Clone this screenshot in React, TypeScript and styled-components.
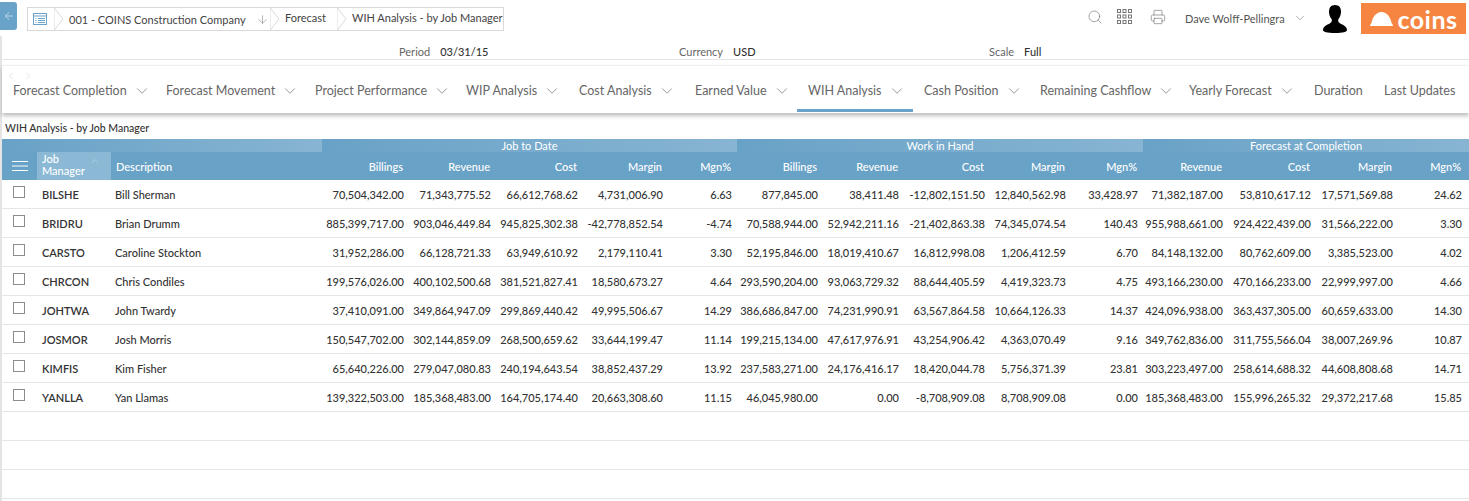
import React from "react";
import styled, { createGlobalStyle } from "styled-components";
import { ArrowLeft, ArrowDown, ChevronDown, ChevronUp, ChevronLeft, ChevronRight, Search, Printer } from "lucide-react";

const Global = createGlobalStyle`
  html, body { margin: 0; padding: 0; background: #fff; overflow: hidden; }
  body { font-family: Lato, "Open Sans", sans-serif; color: #333; }
`;

const Page = styled.div`
  width: 1469px;
  height: 501px;
  overflow: hidden;
  position: relative;
`;
const LeftEdge = styled.div`
  position: absolute;
  left: 0;
  top: 36px;
  bottom: 0;
  width: 2px;
  background: #e4e4e4;
`;
const TopBar = styled.header`
  height: 36px;
  display: flex;
  align-items: flex-start;
`;
const BackButton = styled.button`
  width: 17px;
  height: 28px;
  margin-top: 2px;
  padding: 0;
  border: 0;
  border-radius: 0 3px 3px 0;
  background: #6aa3c9;
  color: #cfe3ef;
  display: flex;
  align-items: center;
  justify-content: center;
`;
const Crumbs = styled.nav`
  display: flex;
  margin: 7px 0 0 10px;
`;
const Crumb = styled.div<{ $w: number; $last?: boolean; $up?: boolean }>`
  position: relative;
  box-sizing: border-box;
  width: ${(p) => p.$w}px;
  height: 24px;
  border: 1px solid #d9d9d9;
  border-left: 0;
  border-right: ${(p) => (p.$last ? "1px solid #d9d9d9" : "0")};
  font-size: 11px;
  color: #444;
  display: flex;
  align-items: ${(p) => (p.$up ? "flex-start" : "center")};
  padding-top: ${(p) => (p.$up ? "3px" : "0")};
  padding-left: 14px;
  gap: 10px;
  white-space: nowrap;
`;
const FirstCrumb = styled(Crumb)`
  border-left: 1px solid #d9d9d9;
  padding-left: 4px;
`;
const CrumbTip = styled.svg`
  position: absolute;
  right: -9px;
  top: -1px;
  z-index: 1;
`;
const TopRight = styled.div`
  margin-left: auto;
  display: flex;
  align-items: flex-start;
  color: #777;
`;
const IconSlot = styled.span<{ $w: number }>`
  width: ${(p) => p.$w}px;
  padding-top: 9px;
  display: flex;
`;
const UserName = styled.span`
  font-size: 11px;
  color: #555;
  padding-top: 12px;
  width: 108px;
`;
const UserChevron = styled.span`
  width: 29px;
  padding-top: 11px;
  display: flex;
  color: #777;
`;
const Avatar = styled.span`
  width: 39px;
  padding-top: 5px;
  display: flex;
`;
const Logo = styled.div`
  width: 105px;
  height: 31px;
  margin: 3px 3px 0 0;
  background: #f58540;
  display: flex;
  align-items: center;
  justify-content: center;
  gap: 3px;
  color: #fff;
  font-size: 25px;
  font-weight: 700;
  line-height: 26px;
  letter-spacing: 0.5px;
`;
const InfoRow = styled.div`
  height: 24px;
  margin-left: 2px;
  border-bottom: 1px solid #e4e4e4;
  display: flex;
  font-size: 11px;
  color: #666;
  padding-top: 9px;
  box-sizing: border-box;
`;
const Info = styled.div<{ $w: number }>`
  width: ${(p) => p.$w}px;
  display: flex;
  gap: 10px;
  white-space: nowrap;
`;
const InfoValue = styled.span`
  color: #333;
  font-weight: 500;
`;
const NavBlock = styled.div`
  position: relative;
  height: 48px;
  margin: 5px 0 0 2px;
  border-top: 1px solid #f0f0f0;
  box-sizing: border-box;
  box-shadow: 0 3px 4px rgba(0, 0, 0, 0.25);
  background: #fff;
`;
const Pager = styled.div`
  position: absolute;
  left: 3px;
  top: 4px;
  display: flex;
  gap: 5px;
  color: #c9c9c9;
`;
const Tabs = styled.div`
  display: flex;
  height: 100%;
  padding-top: 17px;
  box-sizing: border-box;
`;
const Tab = styled.div<{ $w: number; $active?: boolean }>`
  box-sizing: border-box;
  width: ${(p) => p.$w}px;
  padding-left: 11px;
  font-size: 12.5px;
  color: #666;
  display: flex;
  gap: 6px;
  height: 29px;
  white-space: nowrap;
  border-bottom: ${(p) => (p.$active ? "3px solid #6aa3c9" : "3px solid transparent")};
`;
const TabChevron = styled.span`
  display: flex;
  color: #777;
  margin-top: -1px;
`;
const Title = styled.div`
  height: 26px;
  padding: 9px 0 0 5px;
  box-sizing: border-box;
  font-size: 10.5px;
  color: #333;
  font-weight: 500;
`;
const COLS =
  "35px 74px 211px 87px 87px 87px 85px 69px 86px 81px 86px 81px 72px 85px 88px 82px 69px";
const Table = styled.div`
  margin-left: 2px;
`;
const GroupRow = styled.div`
  display: grid;
  grid-template-columns: 320px 415px 406px 1fr;
  height: 13px;
  background: #69a2c7;
`;
const GroupCell = styled.div`
  background: linear-gradient(90deg, rgba(255, 255, 255, 0), rgba(255, 255, 255, 0.2));
  text-align: center;
  color: #fff;
  font-size: 11px;
  line-height: 13px;
`;
const HeadRow = styled.div`
  display: grid;
  grid-template-columns: ${COLS};
  height: 28px;
  background: #69a2c7;
  color: #fff;
  font-size: 11px;
  font-weight: 500;
  align-items: center;
`;
const MenuCell = styled.div`
  display: flex;
  justify-content: center;
  padding-left: 0;
`;
const SortCell = styled.div`
  background: #8ab8d5;
  height: 28px;
  box-sizing: border-box;
  padding-left: 5px;
  line-height: 12px;
  padding-top: 1px;
  position: relative;
`;
const SortIcon = styled.span`
  position: absolute;
  right: 10px;
  top: 3px;
  display: flex;
  color: #cfe3ef;
`;
const HeadText = styled.div`
  padding-left: 5px;
`;
const HeadNum = styled.div`
  text-align: right;
  padding-right: 6px;
`;
const Row = styled.div`
  display: grid;
  grid-template-columns: ${COLS};
  height: 29px;
  box-sizing: border-box;
  border-bottom: 1px solid #e6e6e6;
  align-items: center;
  font-size: 11px;
  font-weight: 500;
  color: #333;
  white-space: nowrap;
`;
const CheckCell = styled.div`
  display: flex;
  padding: 0 0 5px 11px;
`;
const Check = styled.span`
  width: 10px;
  height: 10px;
  border: 1px solid #8c8c8c;
  display: block;
`;
const Code = styled.div`
  padding-left: 5px;
  font-weight: 600;
`;
const Desc = styled.div`
  padding-left: 4px;
`;
const Num = styled.div`
  text-align: right;
  padding-right: 5px;
`;

const heads = ["Billings","Revenue","Cost","Margin","Mgn%","Billings","Revenue","Cost","Margin","Mgn%","Revenue","Cost","Margin","Mgn%"];
const rows: string[][] = [
  ["BILSHE","Bill Sherman","70,504,342.00","71,343,775.52","66,612,768.62","4,731,006.90","6.63","877,845.00","38,411.48","-12,802,151.50","12,840,562.98","33,428.97","71,382,187.00","53,810,617.12","17,571,569.88","24.62"],
  ["BRIDRU","Brian Drumm","885,399,717.00","903,046,449.84","945,825,302.38","-42,778,852.54","-4.74","70,588,944.00","52,942,211.16","-21,402,863.38","74,345,074.54","140.43","955,988,661.00","924,422,439.00","31,566,222.00","3.30"],
  ["CARSTO","Caroline Stockton","31,952,286.00","66,128,721.33","63,949,610.92","2,179,110.41","3.30","52,195,846.00","18,019,410.67","16,812,998.08","1,206,412.59","6.70","84,148,132.00","80,762,609.00","3,385,523.00","4.02"],
  ["CHRCON","Chris Condiles","199,576,026.00","400,102,500.68","381,521,827.41","18,580,673.27","4.64","293,590,204.00","93,063,729.32","88,644,405.59","4,419,323.73","4.75","493,166,230.00","470,166,233.00","22,999,997.00","4.66"],
  ["JOHTWA","John Twardy","37,410,091.00","349,864,947.09","299,869,440.42","49,995,506.67","14.29","386,686,847.00","74,231,990.91","63,567,864.58","10,664,126.33","14.37","424,096,938.00","363,437,305.00","60,659,633.00","14.30"],
  ["JOSMOR","Josh Morris","150,547,702.00","302,144,859.09","268,500,659.62","33,644,199.47","11.14","199,215,134.00","47,617,976.91","43,254,906.42","4,363,070.49","9.16","349,762,836.00","311,755,566.04","38,007,269.96","10.87"],
  ["KIMFIS","Kim Fisher","65,640,226.00","279,047,080.83","240,194,643.54","38,852,437.29","13.92","237,583,271.00","24,176,416.17","18,420,044.78","5,756,371.39","23.81","303,223,497.00","258,614,688.32","44,608,808.68","14.71"],
  ["YANLLA","Yan Llamas","139,322,503.00","185,368,483.00","164,705,174.40","20,663,308.60","11.15","46,045,980.00","0.00","-8,708,909.08","8,708,909.08","0.00","185,368,483.00","155,996,265.32","29,372,217.68","15.85"],
];
const tabs: [string, number, boolean][] = [
  ["Forecast Completion",153,true],["Forecast Movement",149,true],["Project Performance",151,true],["WIP Analysis",113,true],
  ["Cost Analysis",116,true],["Earned Value",113,true],["WIH Analysis",116,true],["Cash Position",116,true],
  ["Remaining Cashflow",149,true],["Yearly Forecast",125,true],["Duration",70,false],["Last Updates",80,false],
];

const Tip = () => (
  <CrumbTip width="10" height="24" viewBox="0 0 10 24">
    <polygon points="0,0.5 9,12 0,23.5" fill="#fff" stroke="#d9d9d9" strokeWidth="1" />
  </CrumbTip>
);

export default function App() {
  return (
    <Page>
      <Global />
      <LeftEdge />
      <TopBar>
        <BackButton aria-label="Back"><ArrowLeft size={12} strokeWidth={1.5} /></BackButton>
        <Crumbs>
          <FirstCrumb $w={28}>
            <svg width="16" height="14" viewBox="0 0 16 14" fill="none" stroke="#6aa3c9" strokeWidth="1">
              <rect x="1.5" y="1.5" width="13" height="11" />
              <path d="M1.5 4h13M3.5 6.5h1M6 6.5h7M3.5 8.5h1M6 8.5h7M3.5 10.5h1M6 10.5h7" />
            </svg>
            <Tip />
          </FirstCrumb>
          <Crumb $w={216}>001 - COINS Construction Company <ArrowDown size={13} strokeWidth={1} color="#777" /><Tip /></Crumb>
          <Crumb $w={67} $up>Forecast<Tip /></Crumb>
          <Crumb $w={166} $last $up>WIH Analysis - by Job Manager</Crumb>
        </Crumbs>
        <TopRight>
          <IconSlot $w={30}><Search size={16} strokeWidth={1} /></IconSlot>
          <IconSlot $w={33}>
            <svg width="15" height="15" viewBox="0 0 15 15" fill="none" stroke="#777" strokeWidth="1">
              {[0, 5.5, 11].map((x) => [0, 5.5, 11].map((y) => <rect key={`${x}-${y}`} x={x + 0.5} y={y + 0.5} width="3" height="3" />))}
            </svg>
          </IconSlot>
          <IconSlot $w={35}><Printer size={16} strokeWidth={1} /></IconSlot>
          <UserName>Dave Wolff-Pellingra</UserName>
          <UserChevron><ChevronDown size={14} strokeWidth={1} /></UserChevron>
          <Avatar>
            <svg width="26" height="28" viewBox="0 0 26 28" fill="#000">
              <path d="M13 0c-4 0-6 2.800-6 6.500 0 3 1 5.500 2.500 7.500.5 1 .5 2.500-.5 3.500C7 19.500 1 20.500 1 25c0 2 4 3 12 3s12-1 12-3c0-4.500-6-5.500-8-7.500-1-1-1-2.500-.5-3.500 1.500-2 2.500-4.500 2.500-7.500C19 2.800 17 0 13 0z" />
            </svg>
          </Avatar>
          <Logo>
            <svg width="25" height="15" viewBox="0 0 25 15" fill="#fff">
              <path d="M1 15c0-1 .500-2 1.500-3C3.500 6 7 1 12.500 1S21.500 6 22.500 12c1 1 1.500 2 1.500 3z" />
            </svg>
            coins
          </Logo>
        </TopRight>
      </TopBar>
      <InfoRow>
        <Info $w={280} style={{ marginLeft: 397 }}>Period <InfoValue>03/31/15</InfoValue></Info>
        <Info $w={310}>Currency <InfoValue>USD</InfoValue></Info>
        <Info $w={200}>Scale <InfoValue>Full</InfoValue></Info>
      </InfoRow>
      <NavBlock>
        <Pager>
          <ChevronLeft size={12} strokeWidth={1} />
          <ChevronRight size={12} strokeWidth={1} />
        </Pager>
        <Tabs>
          {tabs.map(([t, w, c]) => (
            <Tab key={t} $w={w} $active={t === "WIH Analysis"}>
              {t}
              {c && <TabChevron><ChevronDown size={18} strokeWidth={1} /></TabChevron>}
            </Tab>
          ))}
        </Tabs>
      </NavBlock>
      <Title>WIH Analysis - by Job Manager</Title>
      <Table>
        <GroupRow>
          <GroupCell />
          <GroupCell>Job to Date</GroupCell>
          <GroupCell>Work in Hand</GroupCell>
          <GroupCell>Forecast at Completion</GroupCell>
        </GroupRow>
        <HeadRow>
          <MenuCell>
            <svg width="16" height="10" viewBox="0 0 16 10" stroke="#fff" strokeWidth="1"><path d="M0 .5h16M0 5h16M0 9.500h16" /></svg>
          </MenuCell>
          <SortCell>Job<br />Manager<SortIcon><ChevronUp size={12} strokeWidth={1} /></SortIcon></SortCell>
          <HeadText>Description</HeadText>
          {heads.map((h, i) => <HeadNum key={i}>{h}</HeadNum>)}
        </HeadRow>
        {rows.map((r) => (
          <Row key={r[0]}>
            <CheckCell><Check /></CheckCell>
            <Code>{r[0]}</Code>
            <Desc>{r[1]}</Desc>
            {r.slice(2).map((v, i) => <Num key={i}>{v}</Num>)}
          </Row>
        ))}
        <Row />
        <Row />
        <Row />
      </Table>
    </Page>
  );
}
